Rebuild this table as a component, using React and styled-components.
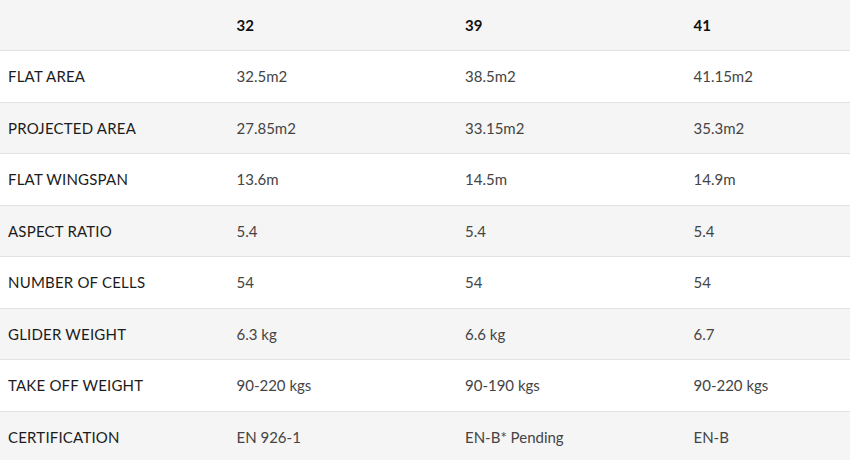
import React from 'react'
import styled, { createGlobalStyle } from 'styled-components'

const GlobalStyle = createGlobalStyle`
  html, body {
    margin: 0;
    padding: 0;
    background: #ffffff;
    overflow: hidden;
  }
  body {
    font-family: Lato, "Open Sans", "Liberation Sans", sans-serif;
  }
`

const Wrapper = styled.section`
  width: 850px;
  height: 460px;
  overflow: hidden;
`

const Table = styled.div`
  display: flex;
  flex-direction: column;
  width: 914px;
`

const Row = styled.div`
  box-sizing: border-box;
  display: grid;
  grid-template-columns: repeat(4, 228.5px);
  align-items: center;
  height: ${props => (props.head ? '51px' : '51.5px')};
  border-bottom: 1.5px solid #e2e2e2;
  background-color: ${props => (props.shaded ? '#f5f5f5' : '#ffffff')};
`

const Label = styled.div`
  padding-left: 8px;
  font-size: 15px;
  letter-spacing: 0.2px;
  color: #1c1c1c;
  text-transform: uppercase;
`

const Cell = styled.div`
  padding-left: 8px;
  font-size: 15px;
  color: #444444;
`

const HeadCell = styled.div`
  padding-left: 8px;
  font-size: 15px;
  font-weight: 700;
  color: #111111;
`

const sizes = ['32', '39', '41']

const specs = [
  ['Flat area', '32.5m2', '38.5m2', '41.15m2'],
  ['Projected area', '27.85m2', '33.15m2', '35.3m2'],
  ['Flat wingspan', '13.6m', '14.5m', '14.9m'],
  ['Aspect ratio', '5.4', '5.4', '5.4'],
  ['Number of cells', '54', '54', '54'],
  ['Glider weight', '6.3 kg', '6.6 kg', '6.7'],
  ['Take off weight', '90-220 kgs', '90-190 kgs', '90-220 kgs'],
  ['Certification', 'EN 926-1', 'EN-B* Pending', 'EN-B'],
]

export default function App() {
  return (
    <Wrapper>
      <GlobalStyle />
      <Table>
        <Row shaded head>
          <HeadCell />
          {sizes.map(s => (
            <HeadCell key={s}>{s}</HeadCell>
          ))}
        </Row>
        {specs.map((row, i) => (
          <Row key={row[0]} shaded={i % 2 === 1}>
            <Label>{row[0]}</Label>
            <Cell>{row[1]}</Cell>
            <Cell>{row[2]}</Cell>
            <Cell>{row[3]}</Cell>
          </Row>
        ))}
      </Table>
    </Wrapper>
  )
}
